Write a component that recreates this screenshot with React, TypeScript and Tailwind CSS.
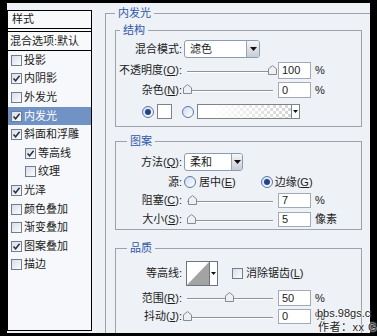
import type { ReactNode } from "react";

const styles = [
  { name: "投影", on: false },
  { name: "内阴影", on: true },
  { name: "外发光", on: false },
  { name: "内发光", on: true, active: true },
  { name: "斜面和浮雕", on: true },
  { name: "等高线", on: true, sub: true },
  { name: "纹理", on: false, sub: true },
  { name: "光泽", on: true },
  { name: "颜色叠加", on: false },
  { name: "渐变叠加", on: false },
  { name: "图案叠加", on: true },
  { name: "描边", on: false },
];

function Check({ on }: { on?: boolean }) {
  return (
    <span className="flex h-[11px] w-[11px] shrink-0 items-center justify-center border border-[#6f7d95] bg-linear-to-br from-[#d9dee7] to-[#fbfcfd]">
      {on && (
        <svg width="9" height="9" viewBox="0 0 9 9">
          <path d="M1.5 4.5 L3.6 6.8 L7.6 1.8" fill="none" stroke="#26303f" strokeWidth="1.5" />
        </svg>
      )}
    </span>
  );
}

function Radio({ on }: { on?: boolean }) {
  return (
    <span className="flex h-[12px] w-[12px] shrink-0 items-center justify-center rounded-full border border-[#5b77a6] bg-linear-to-br from-[#cfdcef] to-white">
      {on && <span className="h-[6px] w-[6px] rounded-full bg-[#23428a]" />}
    </span>
  );
}

function Arrow() {
  return (
    <svg width="7" height="4" viewBox="0 0 7 4">
      <path d="M0 0 H7 L3.5 4 Z" fill="#111" />
    </svg>
  );
}

function Slider({ pct }: { pct: number }) {
  return (
    <div className="relative h-full w-[92px] shrink-0">
      <div className="absolute left-[3px] right-[3px] top-1/2 h-[2px] border-t border-b border-t-[#8e939b] border-b-white" />
      <svg
        width="9"
        height="10"
        viewBox="0 0 9 10"
        className="absolute top-1/2 -translate-y-[6px]"
        style={{ left: `${pct * 85 - 1.5}px` }}
      >
        <path d="M0.5 9.5 V3.8 L4.5 0.6 L8.5 3.8 V9.5 Z" fill="#eef0f2" stroke="#858a93" />
      </svg>
    </div>
  );
}

function Value({ v, unit }: { v: string; unit: string }) {
  return (
    <>
      <span className="ml-[2px] flex h-full w-[33px] shrink-0 items-center border border-[#a2aaba] bg-white pl-[3px]">
        {v}
      </span>
      <span className="ml-[4px]">{unit}</span>
    </>
  );
}

function Row({ label, children, className }: { label: ReactNode; children: ReactNode; className: string }) {
  return (
    <div className={`flex items-center ${className}`}>
      <span className="w-[66px] shrink-0 text-right whitespace-nowrap">{label}</span>
      <div className="ml-[2px] flex h-full items-center">{children}</div>
    </div>
  );
}

export default function App() {
  return (
    <div className="relative h-[336px] w-[377px] overflow-hidden bg-black px-[7px] pt-[3px] pb-[3px] font-[family-name:'Liberation_Sans','Noto_Sans_CJK_SC',sans-serif] text-[11px] leading-none text-[#1c1c1c]">
      <div className="flex h-full bg-[#eef1f6]">
        {/* style list */}
        <div className="mt-[7px] mb-[2px] flex w-[85px] shrink-0 flex-col border border-black bg-[#f6f8fb]">
          <div className="flex h-[18px] items-center border-b border-black bg-[#f8f9fb] pl-[4px]">样式</div>
          <div className="mt-[2px] flex h-[20px] items-center border-t border-b border-black bg-[#f8f9fb] pl-[2px] whitespace-nowrap">
            混合选项:默认
          </div>
          {styles.map((s) => (
            <div
              key={s.name}
              className={`flex h-[18.6px] items-center whitespace-nowrap ${s.sub ? "pl-[17px]" : "pl-[3px]"} ${
                s.active ? "bg-[#7192c4] text-white" : ""
              }`}
            >
              <Check on={s.on} />
              <span className="ml-[2px]">{s.name}</span>
            </div>
          ))}
        </div>

        {/* options */}
        <div className="flex min-w-0 flex-1 flex-col overflow-hidden">
          <fieldset className="mt-[2px] ml-[13px] flex-1 border-t border-l border-[#9ea3ab] pl-[9px]">
            <legend className="px-[3px] leading-[16px] text-[#2f58a8]">内发光</legend>

            <fieldset className="mt-[1px] w-[247px] border border-[#9ea3ab] pb-[7px]">
              <legend className="ml-[4px] px-[3px] leading-[16px] text-[#2f58a8]">结构</legend>
              <Row label="混合模式:" className="mt-[2px] h-[18px]">
                <div className="flex h-full w-[76px] items-center rounded-[3px] border border-[#8c9bb3] bg-white">
                  <span className="flex-1 pl-[5px]">滤色</span>
                  <span className="flex h-full w-[13px] items-center justify-center rounded-r-[2px] border-l border-[#9aa6b8] bg-linear-to-b from-[#f5f6f8] to-[#c7ccd4]">
                    <Arrow />
                  </span>
                </div>
              </Row>
              <Row
                label={
                  <>
                    不透明度(<u>O</u>):
                  </>
                }
                className="mt-[4px] h-[17px]"
              >
                <Slider pct={1} />
                <Value v="100" unit="%" />
              </Row>
              <Row
                label={
                  <>
                    杂色(<u>N</u>):
                  </>
                }
                className="mt-[3px] h-[16px]"
              >
                <Slider pct={0} />
                <Value v="0" unit="%" />
              </Row>
              <div className="mt-[6px] flex h-[15px] items-center pl-[26px]">
                <Radio on />
                <span className="ml-[3px] h-full w-[15px] border border-[#7d838c] bg-white" />
                <span className="ml-[10px]">
                  <Radio />
                </span>
                <div className="ml-[3px] flex h-full">
                  <span className="h-full w-[95px] border border-[#7d838c] bg-[linear-gradient(to_right,#fff_15%,rgba(255,255,255,0)),repeating-conic-gradient(#d4d4d4_0_25%,#fff_0_50%)] [background-size:100%_100%,6px_6px]" />
                  <span className="flex h-full w-[8px] items-center justify-center border border-l-0 border-[#7d838c] bg-white">
                    <svg width="5" height="3" viewBox="0 0 5 3">
                      <path d="M0 0 H5 L2.5 3 Z" fill="#111" />
                    </svg>
                  </span>
                </div>
              </div>
            </fieldset>

            <fieldset className="mt-[6px] w-[247px] border border-[#9ea3ab] pb-[2px]">
              <legend className="ml-[11px] px-[3px] leading-[16px] text-[#2f58a8]">图案</legend>
              <Row
                label={
                  <>
                    方法(<u>Q</u>):
                  </>
                }
                className="mt-[4px] h-[18px]"
              >
                <div className="flex h-full w-[59px] items-center rounded-[3px] border border-[#8c9bb3] bg-white">
                  <span className="flex-1 pl-[5px]">柔和</span>
                  <span className="flex h-full w-[11px] items-center justify-center rounded-r-[2px] border-l border-[#9aa6b8] bg-linear-to-b from-[#f5f6f8] to-[#c7ccd4]">
                    <Arrow />
                  </span>
                </div>
              </Row>
              <Row label="源:" className="mt-[3px] h-[16px]">
                <Radio />
                <span className="ml-[3px]">
                  居中(<u>E</u>)
                </span>
                <span className="ml-[25px]">
                  <Radio on />
                </span>
                <span className="ml-[2px]">
                  边缘(<u>G</u>)
                </span>
              </Row>
              <Row
                label={
                  <>
                    阻塞(<u>C</u>):
                  </>
                }
                className="mt-[3px] h-[15px]"
              >
                <Slider pct={0.07} />
                <Value v="7" unit="%" />
              </Row>
              <Row
                label={
                  <>
                    大小(<u>S</u>):
                  </>
                }
                className="mt-[4px] h-[15px]"
              >
                <Slider pct={0.05} />
                <Value v="5" unit="像素" />
              </Row>
            </fieldset>

            <fieldset className="mt-[10px] w-[247px] border border-[#9ea3ab] pb-[20px]">
              <legend className="ml-[11px] px-[3px] leading-[16px] text-[#2f58a8]">品质</legend>
              <Row label="等高线:" className="mt-[5px] h-[25px]">
                <div className="ml-[2px] flex h-full">
                  <span className="h-full w-[24px] border border-[#6f757e] bg-white">
                    <svg width="22" height="23" viewBox="0 0 22 23" className="block">
                      <path d="M0 23 L22 0 V23 Z" fill="#a3a3a3" />
                    </svg>
                  </span>
                  <span className="flex h-full w-[8px] items-center justify-center border border-l-0 border-[#6f757e] bg-white">
                    <svg width="5" height="3" viewBox="0 0 5 3">
                      <path d="M0 0 H5 L2.5 3 Z" fill="#111" />
                    </svg>
                  </span>
                </div>
                <span className="ml-[14px] flex items-center">
                  <Check />
                  <span className="ml-[3px] whitespace-nowrap">
                    消除锯齿(<u>L</u>)
                  </span>
                </span>
              </Row>
              <Row
                label={
                  <>
                    范围(<u>R</u>):
                  </>
                }
                className="mt-[4px] h-[16px]"
              >
                <Slider pct={0.5} />
                <Value v="50" unit="%" />
              </Row>
              <Row
                label={
                  <>
                    抖动(<u>J</u>):
                  </>
                }
                className="mt-[3px] h-[15px]"
              >
                <Slider pct={0} />
                <Value v="0" unit="%" />
              </Row>
            </fieldset>
          </fieldset>
        </div>
      </div>

      {/* watermark */}
      <div className="absolute top-[308px] left-[317px] text-[11px] leading-none whitespace-nowrap text-[#222] [text-shadow:0_0_2px_#fff,0_0_2px_#fff,0_0_2px_#fff]">
        bbs.98gs.c
      </div>
      <div className="absolute top-[322px] left-[318px] text-[11px] leading-none tracking-[0.5px] whitespace-nowrap text-[#222] [text-shadow:0_0_2px_#fff,0_0_2px_#fff,0_0_2px_#fff]">
        作者：xx G
      </div>
    </div>
  );
}
